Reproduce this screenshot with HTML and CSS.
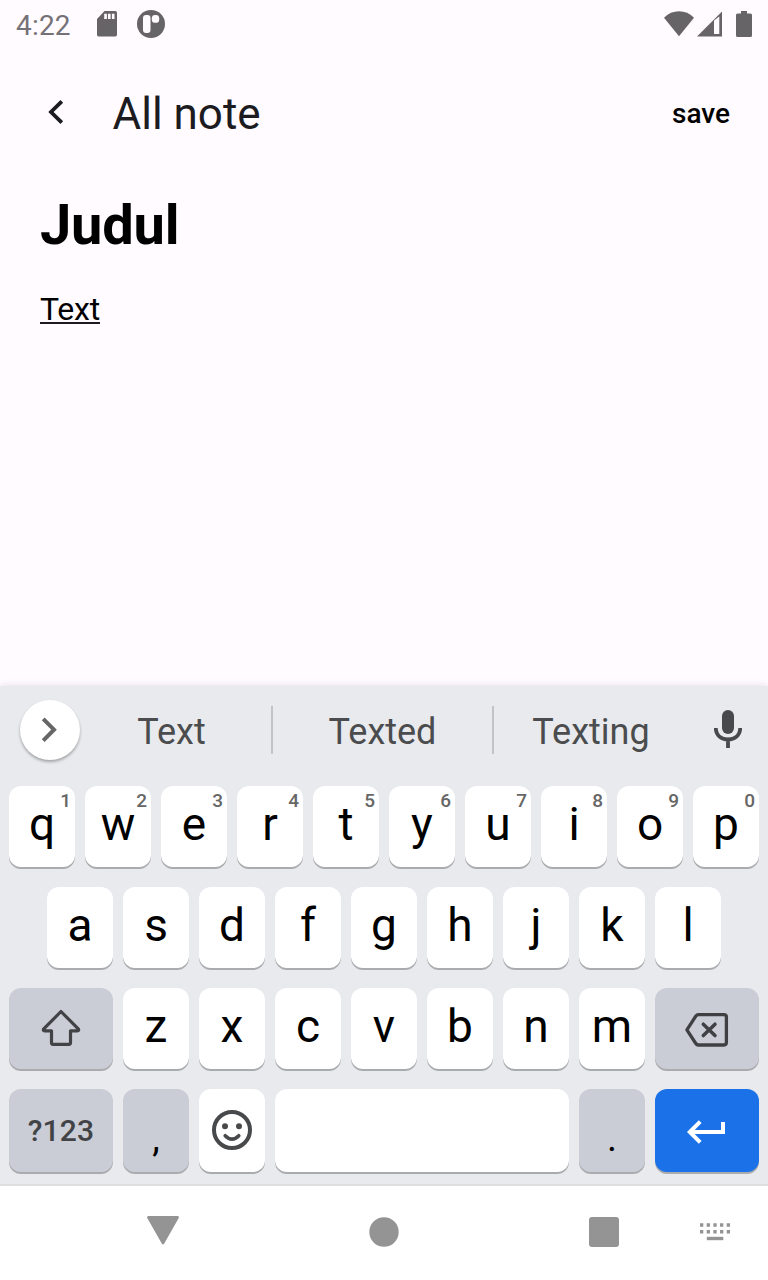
FILE: index.html
```html
<!DOCTYPE html>
<html lang="en">
<head>
<meta charset="utf-8">
<title>All note</title>
<link rel="stylesheet" href="styles.css">
</head>
<body>
<div class="screen">
  <header class="status">
    <span class="clock">4:22</span>
    <svg class="sd" width="20" height="26" viewBox="0 0 20 26"><path fill="#666467" fill-rule="evenodd" d="M7.5 0H18.3Q20 0 20 1.7V23.8Q20 25.5 18.3 25.5H1.7Q0 25.5 0 23.8V8ZM7.2 2.8V8H9.9V2.8ZM11 2.8V8H13.6V2.8ZM14.9 2.8V8H17.5V2.8Z"/></svg>
    <svg class="app" width="28" height="28" viewBox="0 0 28 28"><circle cx="14" cy="14" r="14" fill="#666467"/><rect x="6" y="5" width="7.5" height="18" rx="3" fill="#fffbff"/><rect x="14.8" y="5" width="7.4" height="7.8" rx="3.4" fill="#fffbff"/></svg>
    <div class="signals">
      <svg width="30" height="26" viewBox="0 0 30 26"><path fill="#666467" d="M0 6.7Q6.5.3 15 .3T30 6.7L15 25.3Z"/></svg>
      <svg class="cell" width="26" height="26" viewBox="0 0 26 26"><path fill="#666467" fill-rule="evenodd" d="M25 .6V25.5H0ZM17 9.5V23H22.3V5.5Z"/></svg>
      <svg class="battery" width="16" height="26" viewBox="0 0 16 26"><path fill="#666467" d="M5 0H11V2.4H14.5Q16 2.4 16 3.9V24.5Q16 26 14.5 26H1.5Q0 26 0 24.5V3.9Q0 2.4 1.5 2.4H5Z"/></svg>
    </div>
  </header>

  <nav class="bar">
    <svg class="back" width="18" height="26" viewBox="0 0 18 26"><path d="M14.8 2.3 4 13 14.8 23.7" fill="none" stroke="#1c1b1f" stroke-width="3.8"/></svg>
    <span class="bar-title">All note</span>
    <span class="save">save</span>
  </nav>

  <main class="note">
    <h1 class="heading">Judul</h1>
    <p class="body"><span class="composing">Text</span></p>
  </main>

  <section class="keyboard">
    <div class="suggestions">
      <div class="expand"><svg width="60" height="60" viewBox="0 0 60 60"><path d="M23.2 18.8 34 29.7 23.2 40.6" fill="none" stroke="#666" stroke-width="4"/></svg></div>
      <span class="word first">Text</span>
      <span class="word second">Texted</span>
      <span class="word third">Texting</span>
      <svg class="mic" width="28" height="38" viewBox="0 0 28 38"><rect x="8" y="0" width="12" height="24" rx="6" fill="#48494b"/><path d="M1.8 18C1.8 25.5 7.5 29.5 14 29.5S26.2 25.5 26.2 18M14 29.5V38" fill="none" stroke="#48494b" stroke-width="3.8"/></svg>
    </div>
    <div class="keys">
      <div class="row">
        <span class="key">q<sup class="hint">1</sup></span><span class="key">w<sup class="hint">2</sup></span><span class="key">e<sup class="hint">3</sup></span><span class="key">r<sup class="hint">4</sup></span><span class="key">t<sup class="hint">5</sup></span><span class="key">y<sup class="hint">6</sup></span><span class="key">u<sup class="hint">7</sup></span><span class="key">i<sup class="hint">8</sup></span><span class="key">o<sup class="hint">9</sup></span><span class="key">p<sup class="hint">0</sup></span>
      </div>
      <div class="row">
        <span class="key">a</span><span class="key">s</span><span class="key">d</span><span class="key">f</span><span class="key">g</span><span class="key">h</span><span class="key">j</span><span class="key">k</span><span class="key">l</span>
      </div>
      <div class="row">
        <span class="key wide dim"><svg width="104" height="81" viewBox="0 0 104 81"><path d="M52 23.5 34.5 41.2Q34 42.8 35.5 42.8H42.5V54.8Q42.5 56.3 44 56.3H60Q61.5 56.3 61.5 54.8V42.8H68.5Q70 42.8 69.5 41.2Z" fill="none" stroke="#424346" stroke-width="3.2" stroke-linejoin="round"/></svg></span>
        <span class="key">z</span><span class="key">x</span><span class="key">c</span><span class="key">v</span><span class="key">b</span><span class="key">n</span><span class="key">m</span>
        <span class="key wide dim"><svg width="104" height="81" viewBox="0 0 104 81"><path d="M43.5 26.6H69Q71.4 26.6 71.4 29V54.6Q71.4 57 69 57H43.5Q41.8 57 40.8 55.5L31.9 41.8 40.8 28.1Q41.8 26.6 43.5 26.6Z" fill="none" stroke="#3f4043" stroke-width="3.3" stroke-linejoin="round"/><path d="M48.3 36.2 60 47.6M60 36.2 48.3 47.6" stroke="#3f4043" stroke-width="3.5" stroke-linecap="round"/></svg></span>
      </div>
      <div class="row last">
        <span class="key wide dim symbols">?123</span>
        <span class="key dim punct">,</span>
        <span class="key"><svg width="66" height="83" viewBox="0 0 66 83"><circle cx="33" cy="41" r="18" fill="none" stroke="#48494b" stroke-width="4"/><circle cx="26" cy="37.2" r="3" fill="#48494b"/><circle cx="40" cy="37.2" r="3" fill="#48494b"/><path d="M26.2 46.7Q33 53.6 39.8 46.7" fill="none" stroke="#48494b" stroke-width="3.6" stroke-linecap="round"/></svg></span>
        <span class="key space"></span>
        <span class="key dim punct">.</span>
        <span class="key wide enter"><svg width="104" height="83" viewBox="0 0 104 83"><path d="M45.2 32.6 34.8 43 45.2 53.4M35 43H68V33" fill="none" stroke="#fff" stroke-width="4"/></svg></span>
      </div>
    </div>
  </section>

  <footer class="navbar">
    <svg class="nav-back" width="32" height="29" viewBox="0 0 32 29"><path d="M1.4 1.4H30.6L16 27Z" fill="#949494" stroke="#949494" stroke-width="2.6" stroke-linejoin="round"/></svg>
    <svg class="nav-home" width="30" height="30" viewBox="0 0 30 30"><circle cx="15" cy="15" r="14.7" fill="#949494"/></svg>
    <svg class="nav-recent" width="30" height="30" viewBox="0 0 30 30"><rect width="30" height="30" rx="3" fill="#949494"/></svg>
    <svg class="nav-ime" width="30" height="18" viewBox="0 0 30 18"><path d="M0 2H30M0 8.7H30" stroke="#949494" stroke-width="3.4" stroke-dasharray="3.3 3.375"/><path d="M6.8 15.5H23.3" stroke="#949494" stroke-width="3.4"/></svg>
  </footer>
</div>
</body>
</html>
```
FILE: styles.css
```css
* { box-sizing: border-box; }
body { margin: 0; font-family: Roboto, "Liberation Sans", sans-serif; }
svg { display: block; flex: none; }
.screen { width: 768px; height: 1280px; display: flex; flex-direction: column; background: #fffbff; overflow: hidden; }

.status { height: 48px; flex: none; display: flex; align-items: flex-start; padding: 0 16px; }
.clock { width: 81px; font-size: 28px; line-height: 32px; padding-top: 10px; color: #757277; letter-spacing: 0.2px; }
.sd { margin-top: 11px; }
.app { margin: 10px 0 0 20px; }
.signals { display: flex; margin: 11px 0 0 auto; }
.cell { margin-left: 3px; }
.battery { margin-left: 13px; }

.bar { height: 128px; flex: none; display: flex; align-items: center; padding: 0 38px 0 47px; }
.back { margin-right: 47.5px; }
.bar-title { font-size: 44px; line-height: 52px; color: #1c1b1f; margin-top: 4px; }
.save { margin: 4px 0 0 auto; font-size: 28px; line-height: 32px; font-weight: 500; color: #000; }

.note { flex: 1; padding: 16px 40px 0; color: #000; }
.heading { margin: 0; font-size: 56px; line-height: 66px; font-weight: 700; letter-spacing: -0.2px; }
.body { margin: 32px 0 0; font-size: 32px; line-height: 38px; letter-spacing: -0.2px; }
.composing { display: inline-block; height: 34px; border-bottom: 2px solid #1c1b1f; }

.keyboard { height: 500px; flex: none; background: #e8eaed; border-bottom: 2px solid #dedfe1; box-shadow: 0 0 8px rgba(0, 0, 0, .12); }
.suggestions { height: 100px; display: flex; align-items: flex-start; padding: 14px 26px 0 20px; }
.expand { width: 60px; height: 60px; border-radius: 50%; background: #fff; box-shadow: 0 2px 3px rgba(0, 0, 0, .3); }
.word { height: 48px; margin-top: 6px; font-size: 36px; line-height: 52px; color: #4b4c4e; text-align: center; }
.first { width: 193px; padding-right: 8px; border-right: 2px solid #c1c3c7; }
.second { width: 221px; border-right: 2px solid #c1c3c7; }
.third { width: 194px; }
.mic { margin: 10px 0 0 26px; }

.keys { display: flex; flex-direction: column; gap: 20px; }
.row { height: 81px; display: flex; justify-content: center; gap: 10px; }
.last { height: 83px; }
.key { position: relative; width: 66px; display: flex; align-items: center; justify-content: center; background: #fff; border-radius: 12px; box-shadow: 0 2px 0 #a9abae; color: #000; font-size: 46px; line-height: 54px; padding-bottom: 5px; }
.key svg { margin-bottom: -5px; }
.hint { position: absolute; top: 4px; right: 4px; font-size: 19px; line-height: 22px; font-weight: 500; color: #666; }
.wide { width: 104px; }
.dim { background: #cacdd5; }
.symbols { color: #424346; font-size: 30px; font-weight: 500; letter-spacing: 0.2px; padding-bottom: 0; }
.punct { align-items: flex-end; padding-bottom: 12px; font-size: 38px; line-height: 44px; }
.space { width: 294px; }
.enter { background: #1b72e8; }

.navbar { height: 94px; flex: none; background: #fff; display: flex; align-items: flex-start; padding-left: 147px; position: relative; }
.nav-back { margin-top: 30px; }
.nav-home { margin: 31px 0 0 190px; }
.nav-recent { margin: 31px 0 0 190px; }
.nav-ime { margin: 37px 0 0 81px; }
```
